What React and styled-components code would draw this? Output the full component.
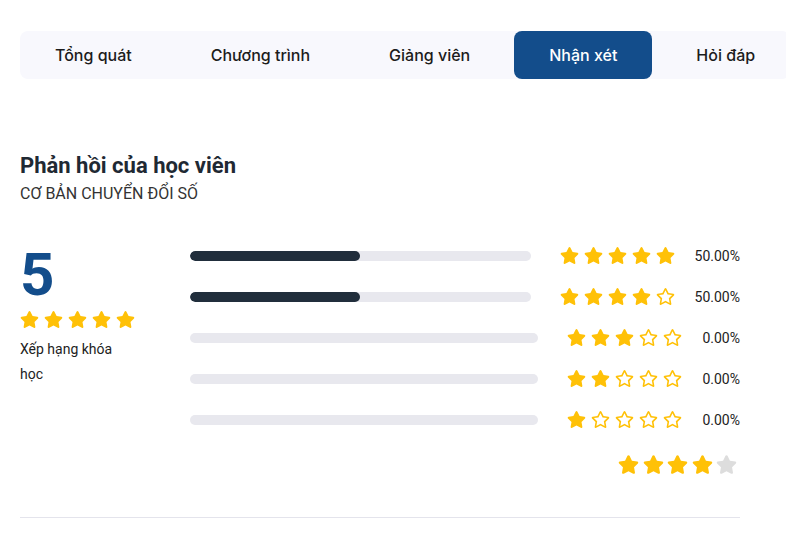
import React from 'react';
import styled, { createGlobalStyle } from 'styled-components';
import { FaStar, FaRegStar } from 'react-icons/fa';

const GlobalStyle = createGlobalStyle`
    html, body {
        margin: 0;
        overflow: hidden;
        background: #fff;
    }
    body {
        font-family: Roboto, "Liberation Sans", sans-serif;
        color: #222;
    }
`

const tabs = ['Tổng quát', 'Chương trình', 'Giảng viên', 'Nhận xét', 'Hỏi đáp'];

const breakdown = [
    { stars: 5, percent: 50 },
    { stars: 4, percent: 50 },
    { stars: 3, percent: 0 },
    { stars: 2, percent: 0 },
    { stars: 1, percent: 0 },
];

const StarRow = ({ count, size, gap, empty = 'outline' }) => (
    <Stars gap={gap}>
        {[0, 1, 2, 3, 4].map(i =>
            i < count
                ? <FaStar key={i} size={size} color="#ffc107" />
                : empty === 'outline'
                    ? <FaRegStar key={i} size={size} color="#ffc107" />
                    : <FaStar key={i} size={size} color="#dddddd" />
        )}
    </Stars>
)

function App() {
    return (
        <Page>
            <GlobalStyle />
            <TabBar>
                {tabs.map(t => (
                    <Tab key={t} active={t === 'Nhận xét'}>{t}</Tab>
                ))}
            </TabBar>

            <Title>Phản hồi của học viên</Title>
            <Subtitle>CƠ BẢN CHUYỂN ĐỔI SỐ</Subtitle>

            <Summary>
                <Overall>
                    <BigScore>5</BigScore>
                    <StarRow count={5} size={19} gap={5} />
                    <OverallLabel>Xếp hạng khóa học</OverallLabel>
                </Overall>
                <Breakdown>
                    {breakdown.map(row => (
                        <BarRow key={row.stars}>
                            <Track>
                                <Fill style={{ width: `${row.percent}%` }} />
                            </Track>
                            <StarRow count={row.stars} size={19} gap={5} />
                            <Percent>{row.percent.toFixed(2)}%</Percent>
                        </BarRow>
                    ))}
                    <Average>
                        <StarRow count={4} size={21} gap={3.5} empty="grey" />
                    </Average>
                </Breakdown>
            </Summary>

            <Divider />
        </Page>
    )
}

const Page = styled.div`
    padding: 31px 0 40px 20px;
    width: 720px;
`

const TabBar = styled.div`
    display: flex;
    gap: 9px;
    width: max-content;
    height: 48px;
    background-color: #f8f8fd;
    border-radius: 8px;
`

const Tab = styled.div`
    display: flex;
    align-items: center;
    padding: 0 35px;
    border-radius: 8px;
    font-family: Inter, Roboto, sans-serif;
    font-size: 16px;
    font-weight: 500;
    color: ${props => props.active ? '#fff' : '#1c1c1c'};
    background-color: ${props => props.active ? '#134d8b' : 'transparent'};
`

const Title = styled.h2`
    margin: 74px 0 0;
    font-size: 22px;
    line-height: 26px;
    font-weight: 700;
    color: #1f2933;
`

const Subtitle = styled.div`
    margin-top: 5px;
    font-size: 16px;
    line-height: 20px;
    color: #333;
`

const Summary = styled.div`
    display: grid;
    grid-template-columns: 170px 1fr;
    margin-top: 31px;
`

const Overall = styled.div`
    padding-top: 10px;
`

const BigScore = styled.div`
    font-size: 60px;
    line-height: 60px;
    font-weight: 700;
    color: #134d8b;
    margin-bottom: 5px;
`

const OverallLabel = styled.div`
    margin-top: 8px;
    width: 115px;
    font-size: 14px;
    line-height: 25px;
    color: #222;
`

const Breakdown = styled.div`
    display: flex;
    flex-direction: column;
`

const BarRow = styled.div`
    display: flex;
    align-items: center;
    height: 41px;
`

const Track = styled.div`
    flex: 1;
    height: 10px;
    border-radius: 5px;
    background-color: #e8e8ee;
    overflow: hidden;
    margin-right: 29px;
`

const Fill = styled.div`
    height: 100%;
    border-radius: 5px;
    background-color: #212e3c;
`

const Stars = styled.div`
    display: flex;
    align-items: center;
    gap: ${props => props.gap}px;
`

const Percent = styled.div`
    margin-left: 20px;
    font-size: 14px;
    color: #222;
`

const Average = styled.div`
    display: flex;
    justify-content: flex-end;
    margin-top: 14px;
    padding-right: 3px;
`

const Divider = styled.div`
    margin-top: 42px;
    height: 1px;
    background-color: #e4e4ec;
`

export default App
